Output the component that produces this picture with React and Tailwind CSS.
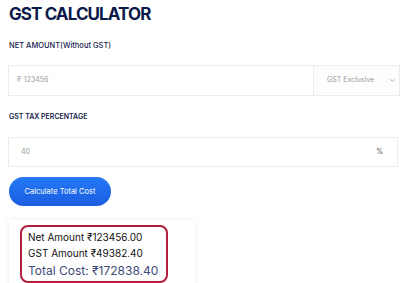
import { ChevronDown } from 'lucide-react';

const font = { fontFamily: 'Inter, "Noto Sans", sans-serif' };

export default function App() {
  return (
    <div className="w-[400px] h-[283px] overflow-hidden bg-white pl-[8px]" style={font}>
      <h1 className="pt-[4px] text-[17px] leading-[20px] font-bold text-[#0b1a4a] tracking-[-0.9px] ml-[1px]">
        GST CALCULATOR
      </h1>

      <div className="mt-[17px] ml-[1px] text-[7.5px] leading-[10px] font-medium text-[#15214d]">
        NET AMOUNT(Without GST)
      </div>

      <div className="mt-[14px] flex h-[31px] border border-[#ececec] bg-white">
        <div className="flex flex-1 items-center pl-[8px] text-[7px] text-[#9a9a9a]">
          <span className="mr-[3px]">₹</span>
          <span>123456</span>
        </div>
        <div className="flex w-[86px] items-center justify-between border-l border-[#ececec] bg-[#fdfdfd] pl-[13px] pr-[3px] text-[7px] text-[#9a9a9a]">
          <span>GST Exclusive</span>
          <ChevronDown size={7} strokeWidth={2} className="text-[#777]" />
        </div>
      </div>

      <div className="mt-[16px] ml-[1px] text-[7px] leading-[10px] font-semibold text-[#15214d]">
        GST TAX PERCENTAGE
      </div>

      <div className="mt-[15px] flex h-[30px] items-center justify-between border border-[#ececec] pl-[12px] pr-[14px] text-[7px] text-[#9a9a9a] mr-[2px]">
        <span>40</span>
        <span className="text-[#555]">%</span>
      </div>

      <button className="mt-[10px] ml-[1px] flex h-[29px] w-[102px] items-center justify-center rounded-full bg-gradient-to-b from-[#2479f6] to-[#1b5de0] text-[7.5px] text-white">
        Calculate Total Cost
      </button>

      <div className="mt-[14px] ml-[1px] w-[186px] h-[70px] bg-white shadow-[0_0_6px_rgba(0,0,0,0.08)] pt-[5px] pl-[11px]">
        <div className="inline-block whitespace-nowrap rounded-[8px] border-2 border-[#b3203c] pl-[6px] pr-[8px] pt-[3px] pb-[1px]">
          <div className="text-[10px] leading-[15px] text-[#111]">Net Amount ₹123456.00</div>
          <div className="text-[10px] leading-[16px] text-[#111]">GST Amount ₹49382.40</div>
          <div className="text-[12px] leading-[19px] text-[#404a78]">Total Cost: ₹172838.40</div>
        </div>
      </div>
    </div>
  );
}
